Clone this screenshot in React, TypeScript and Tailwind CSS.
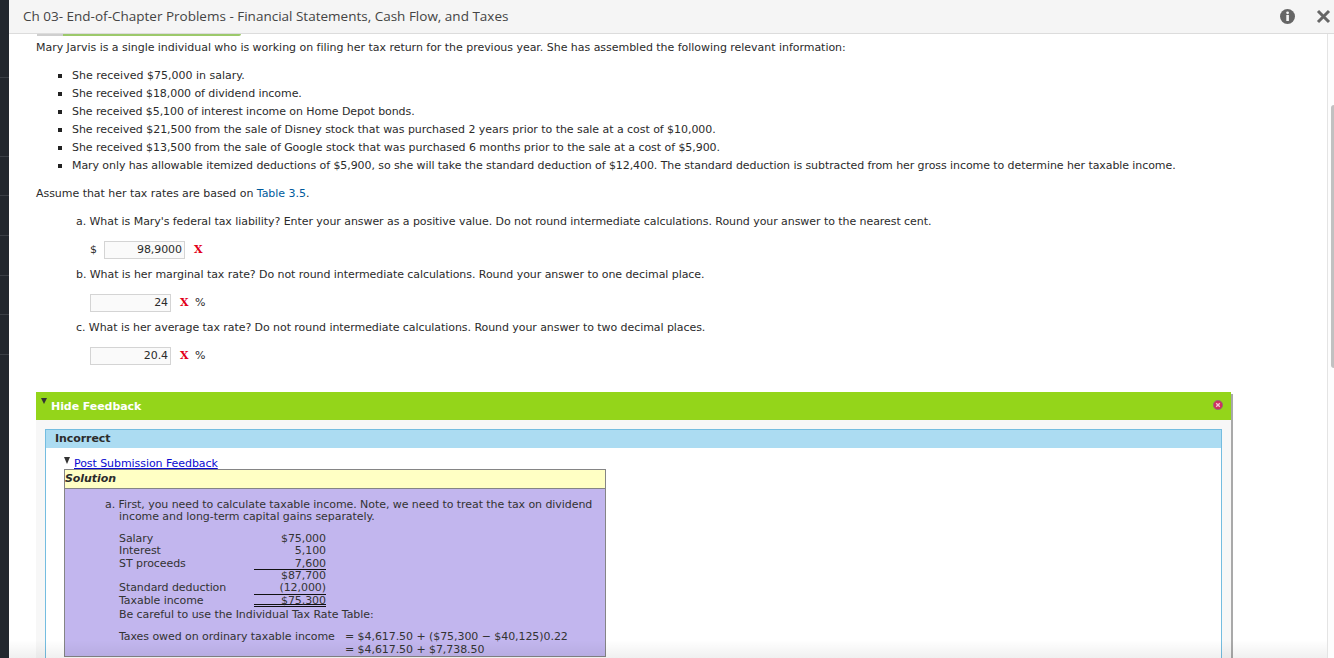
const items = [
  { t: "She received $75,000 in salary.", c: "tracking-[0px]" },
  { t: "She received $18,000 of dividend income.", c: "tracking-[-0.07px]" },
  { t: "She received $5,100 of interest income on Home Depot bonds.", c: "tracking-[-0.08px]" },
  { t: "She received $21,500 from the sale of Disney stock that was purchased 2 years prior to the sale at a cost of $10,000.", c: "tracking-[-0.05px]" },
  { t: "She received $13,500 from the sale of Google stock that was purchased 6 months prior to the sale at a cost of $5,900.", c: "tracking-[-0.06px]" },
  { t: "Mary only has allowable itemized deductions of $5,900, so she will take the standard deduction of $12,400. The standard deduction is subtracted from her gross income to determine her taxable income.", c: "tracking-[-0.08px]" },
];

function Answer({ value, prefix, pct }: { value: string; prefix?: boolean; pct?: boolean }) {
  return (
    <div className="flex items-center h-[18px]">
      {prefix && <span className="w-[14px]">$</span>}
      <div className="w-[81px] h-[18px] border border-[#d4d4d4] bg-[#fafafa] text-right pr-[2px] leading-[16px]">{value}</div>
      <span className="ml-[9px] w-[7px] text-[#e2001a] font-bold leading-[16px] font-['DejaVu_Serif',serif] text-[11px]">X</span>
      {pct && <span className="ml-[8px]">%</span>}
    </div>
  );
}

function Row({ label, value, line, dbl }: { label: string; value: string; line?: boolean; dbl?: boolean }) {
  return (
    <div className="flex h-[12.4px] leading-[12.4px]">
      <span className="w-[135px]">{label}</span>
      <span className={`w-[72px] text-right ${line ? "border-b border-[#111]" : ""} ${dbl ? "border-b-[3px] border-double border-[#111]" : ""}`}>{value}</span>
    </div>
  );
}

export default function App() {
  return (
    <div className="h-[658px] w-[1334px] overflow-hidden flex bg-white text-[11px] text-[#2b2b2b] tracking-[-0.065px] font-['DejaVu_Sans','Liberation_Sans',sans-serif]">
      <div className="w-[9px] h-full bg-[#22272e] flex flex-col shrink-0">
        <div className="h-[78px] border-b border-[#3a3f46]" />
        <div className="h-[79px] border-b border-[#3a3f46]" />
        <div className="h-[39px] border-b border-[#3a3f46]" />
        <div className="h-[40px] border-b border-[#3a3f46]" />
        <div className="h-[40px] border-b border-[#3a3f46]" />
        <div className="h-[39px] border-b border-[#3a3f46]" />
        <div className="h-[40px] border-b border-[#3a3f46]" />
      </div>
      <div className="flex-1 flex flex-col min-w-0 relative">
        <header className="h-[34px] shrink-0 bg-[#f5f5f5] border-b border-[#dcdcdc] flex items-center pl-[14px] pr-[3px] font-['Open_Sans',sans-serif] text-[13.5px] tracking-normal text-[#444]">
          <span className="flex-1">Ch 03- End-of-Chapter Problems - Financial Statements, Cash Flow, and Taxes</span>
          <svg width="15" height="15" viewBox="0 0 15 15" className="mr-[21px]">
            <circle cx="7.5" cy="7.5" r="7.5" fill="#666" />
            <rect x="6.3" y="6" width="2.6" height="6" fill="#f5f5f5" />
            <circle cx="7.6" cy="3.8" r="1.4" fill="#f5f5f5" />
          </svg>
          <svg width="15" height="15" viewBox="0 0 15 15">
            <path d="M2 2 L13 13 M13 2 L2 13" stroke="#666" strokeWidth="3" />
          </svg>
        </header>
        <div className="flex-1 flex min-h-0">
          <main className="flex-1 min-w-0 pl-[27px] relative overflow-hidden">
            <div className="absolute left-[28px] top-0 w-[204px] h-[2px] bg-[#9cc96b] rounded-b">
              <div className="w-[26px] h-[2px] bg-[#cfcfcf]" />
            </div>
            <p className="mt-[7px] leading-[13px] tracking-[-0.033px]">Mary Jarvis is a single individual who is working on filing her tax return for the previous year. She has assembled the following relevant information:</p>
            <ul className="mt-[13px] ml-[36px]">
              {items.map((i) => (
                <li key={i.t} className={`h-[18px] leading-[18px] relative ${i.c}`}>
                  <span className="absolute left-[-14px] top-[7px] w-[4px] h-[4px] bg-[#222]" />
                  {i.t}
                </li>
              ))}
            </ul>
            <p className="mt-[10px] leading-[18px] tracking-[-0.04px]">Assume that her tax rates are based on <span className="text-[#005a9c]">Table 3.5</span>.</p>
            <div className="ml-[40px]">
              <p className="mt-[10px] leading-[18px]">a. What is Mary's federal tax liability? Enter your answer as a positive value. Do not round intermediate calculations. Round your answer to the nearest cent.</p>
              <div className="mt-[10px] ml-[14px]"><Answer prefix value="98,9000" /></div>
              <p className="mt-[7px] leading-[18px]">b. What is her marginal tax rate? Do not round intermediate calculations. Round your answer to one decimal place.</p>
              <div className="mt-[10px] ml-[14px]"><Answer pct value="24" /></div>
              <p className="mt-[7px] leading-[18px]">c. What is her average tax rate? Do not round intermediate calculations. Round your answer to two decimal places.</p>
              <div className="mt-[10px] ml-[14px]"><Answer pct value="20.4" /></div>
            </div>
            <section className="mt-[27px] w-[1195px] shadow-[2px_2px_0_#a9a9a9] bg-[#f7f7f7] pb-[40px]">
              <div className="h-[28px] bg-[#94d51a] relative flex items-center pl-[15px] pt-[2px] text-white font-bold">
                <span className="absolute left-[5px] top-[6px] w-0 h-0 border-l-[3px] border-r-[3px] border-t-[6px] border-l-transparent border-r-transparent border-t-[#333]" />
                Hide Feedback
                <svg width="10" height="10" viewBox="0 0 10 10" className="absolute right-[8px] top-[8px]">
                  <circle cx="5" cy="5" r="4.6" fill="#d0305f" stroke="#8f6a78" strokeWidth="0.8" />
                  <path d="M3.2 3.2 L6.8 6.8 M6.8 3.2 L3.2 6.8" stroke="#f5c6d4" strokeWidth="1.3" />
                </svg>
              </div>
              <div className="mt-[9px] mx-[9px] border border-[#74bde0] bg-white">
                <div className="h-[18px] bg-[#acdcf2] pl-[9px] font-bold leading-[18px]">Incorrect</div>
                <div className="pl-[18px] pt-[8px] pb-[40px]">
                  <div className="flex items-start h-[13px] leading-[13px] pt-[1px]">
                    <span className="w-0 h-0 border-l-[3.5px] border-r-[3.5px] border-t-[7px] border-l-transparent border-r-transparent border-t-[#333]" />
                    <a className="ml-[4px] text-[#0a0ad0] underline">Post Submission Feedback</a>
                  </div>
                  <div className="w-[542px] border border-[#858585] bg-[#c2b6ee]">
                    <div className="h-[19px] bg-[#ffffc4] border-b border-[#858585] font-bold italic leading-[18px]">Solution</div>
                    <div className="pl-[40px] pt-[10px] pr-[4px] text-[#333]">
                      <p className="leading-[12.4px] whitespace-nowrap">a. First, you need to calculate taxable income. Note, we need to treat the tax on dividend<br /><span className="pl-[14px]">income and long-term capital gains separately.</span></p>
                      <div className="mt-[9px] ml-[14px]">
                        <Row label="Salary" value="$75,000" />
                        <Row label="Interest" value="5,100" />
                        <Row label="ST proceeds" value="7,600" line />
                        <Row label="" value="$87,700" />
                        <Row label="Standard deduction" value="(12,000)" line />
                        <Row label="Taxable income" value="$75,300" dbl />
                        <p className="mt-[1px] leading-[13px]">Be careful to use the Individual Tax Rate Table:</p>
                        <div className="mt-[10px] flex leading-[12.4px]">
                          <span className="w-[226px]">Taxes owed on ordinary taxable income</span>
                          <div>
                            <div>= $4,617.50 + ($75,300 − $40,125)0.22</div>
                            <div>= $4,617.50 + $7,738.50</div>
                          </div>
                        </div>
                      </div>
                    </div>
                  </div>
                </div>
              </div>
            </section>
            <div className="absolute left-0 right-0 bottom-0 h-[18px] bg-gradient-to-b from-transparent to-[#0000000f]" />
          </main>
          <aside className="w-[7px] shrink-0 bg-[#fdfdfd] border-l border-[#e4e4e4] pt-[71px] pl-[3px]">
            <div className="w-[3px] h-[263px] rounded-l-[3px] bg-[#c1c1c1]" />
          </aside>
        </div>
      </div>
    </div>
  );
}
